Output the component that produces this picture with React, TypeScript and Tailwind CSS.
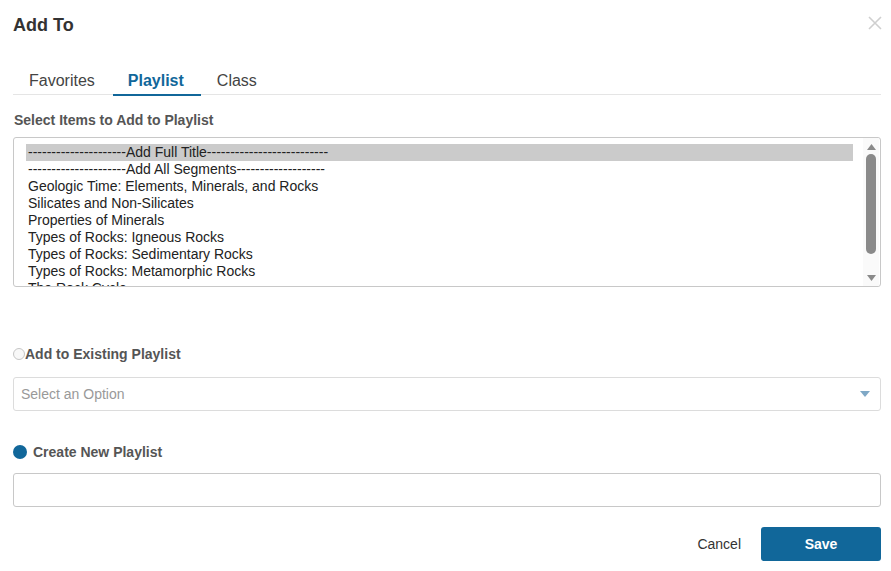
import React from 'react';

const items = [
  '---------------------Add Full Title--------------------------',
  '---------------------Add All Segments-------------------',
  'Geologic Time: Elements, Minerals, and Rocks',
  'Silicates and Non-Silicates',
  'Properties of Minerals',
  'Types of Rocks: Igneous Rocks',
  'Types of Rocks: Sedimentary Rocks',
  'Types of Rocks: Metamorphic Rocks',
  'The Rock Cycle',
];

export default function App() {
  return (
    <div
      className="w-[891px] h-[571px] bg-white pl-[13px] pr-[10px] text-[#333] overflow-hidden"
      style={{ fontFamily: '"Liberation Sans", Arial, sans-serif' }}
    >
      {/* header */}
      <div className="flex justify-between items-center pt-[13px] h-[36px]">
        <h1 className="text-[18px] font-bold text-[#333] leading-[22px]">Add To</h1>
        <svg width="14" height="14" viewBox="0 0 14 14" className="mr-[-1px] mt-[-4px]">
          <path d="M1 1L13 13M13 1L1 13" stroke="#cfcfcf" strokeWidth="1.6" />
        </svg>
      </div>

      {/* tabs */}
      <div className="mt-[35px] flex border-b border-[#e5e5e5] text-[16px] leading-[20px]">
        <div className="px-[16px] pb-[3px] text-[#444]">Favorites</div>
        <div className="ml-[2px] pl-[15px] pr-[17px] pb-[1px] font-bold text-[#11679a] border-b-2 border-[#11679a] mb-[-2px]">
          Playlist
        </div>
        <div className="px-[16px] pb-[3px] text-[#444]">Class</div>
      </div>

      <div className="mt-[17px] ml-[1px] text-[14px] font-bold text-[#555] leading-[16px]">
        Select Items to Add to Playlist
      </div>

      {/* listbox */}
      <div className="mt-[9px] h-[150px] border border-[#c8c8c8] rounded-[3px] flex overflow-hidden">
        <div className="flex-1 pt-[6px] pl-[12px] pr-[10px] overflow-hidden">
          {items.map((it, i) => (
            <div
              key={i}
              className={`h-[17px] leading-[17px] text-[14px] pl-[2px] text-[#222] whitespace-nowrap ${
                i === 0 ? 'bg-[#cbcbcb]' : ''
              }`}
            >
              {it}
            </div>
          ))}
        </div>
        <div className="w-[16px] mr-[1px] flex flex-col items-center pt-[6px] pb-[5px] bg-[#fafafa]">
          <svg width="9" height="6" viewBox="0 0 9 6">
            <path d="M4.5 0L9 6H0Z" fill="#8a8a8a" />
          </svg>
          <div className="mt-[4px] w-[10px] h-[100px] rounded-full bg-[#8a8a8a]" />
          <div className="flex-1" />
          <svg width="9" height="6" viewBox="0 0 9 6">
            <path d="M0 0H9L4.5 6Z" fill="#8a8a8a" />
          </svg>
        </div>
      </div>

      {/* existing playlist */}
      <div className="mt-[59px] flex items-center h-[16px]">
        <span className="w-[12px] h-[12px] rounded-full border border-[#c6c6c6] bg-[#f8f8f8]" />
        <span className="text-[14px] font-bold text-[#555]">Add to Existing Playlist</span>
      </div>
      <div className="mt-[15px] h-[34px] border border-[#dcdcdc] rounded-[3px] flex items-center justify-between pl-[7px] pr-[10px]">
        <span className="text-[14px] text-[#999]">Select an Option</span>
        <svg width="10" height="6" viewBox="0 0 10 6">
          <path d="M0 0H10L5 6Z" fill="#7fa8c6" />
        </svg>
      </div>

      {/* new playlist */}
      <div className="mt-[33px] flex items-center gap-[6px] h-[16px]">
        <span className="w-[14px] h-[14px] rounded-full bg-[#11679a]" />
        <span className="text-[14px] font-bold text-[#555]">Create New Playlist</span>
      </div>
      <div className="mt-[13px] h-[34px] border border-[#c8c8c8] rounded-[3px]" />

      {/* actions */}
      <div className="mt-[20px] flex justify-end items-center">
        <button className="text-[14px] text-[#333] mr-[20px]">Cancel</button>
        <button className="w-[120px] h-[34px] rounded-[3px] bg-[#11679a] text-white text-[14px] font-bold">
          Save
        </button>
      </div>
    </div>
  );
}
